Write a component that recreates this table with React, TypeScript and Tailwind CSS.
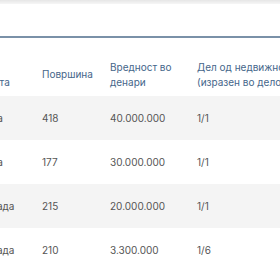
import React from "react";

const rows = [
  { a: "Куќа", b: "418", c: "40.000.000", d: "1/1" },
  { a: "Куќа", b: "177", c: "30.000.000", d: "1/1" },
  { a: "Зграда", b: "215", c: "20.000.000", d: "1/1" },
  { a: "Зграда", b: "210", c: "3.300.000", d: "1/6" },
];

export default function App() {
  return (
    <div
      className="w-[280px] h-[280px] overflow-hidden bg-white"
      style={{ fontFamily: "Inter, 'Noto Sans', sans-serif" }}
    >
      <div className="h-[4px] bg-gradient-to-b from-[#e6e6e6] to-[#f6f6f6]" />
      <div className="h-[32px]" />
      <div className="h-[2px] bg-[#7a91a8]" />
      <div className="-ml-[20px] w-[420px]">
        <div className="grid grid-cols-[62px_68px_87px_200px] h-[58px] pt-[15px] items-center text-[10px] leading-[15px] text-[#45668a]">
          <div>Вид<br />имота</div>
          <div>Површина</div>
          <div>Вредност во<br />денари</div>
          <div className="whitespace-nowrap">Дел од недвижноста<br />(изразен во делови)</div>
        </div>
        {rows.map((r, i) => (
          <div
            key={i}
            className={`grid grid-cols-[62px_68px_87px_200px] h-[44px] items-center text-[10px] text-[#555555] ${
              i % 2 === 0 ? "bg-[#f4f4f4]" : "bg-white"
            }`}
          >
            <div>{r.a}</div>
            <div>{r.b}</div>
            <div>{r.c}</div>
            <div>{r.d}</div>
          </div>
        ))}
      </div>
    </div>
  );
}
